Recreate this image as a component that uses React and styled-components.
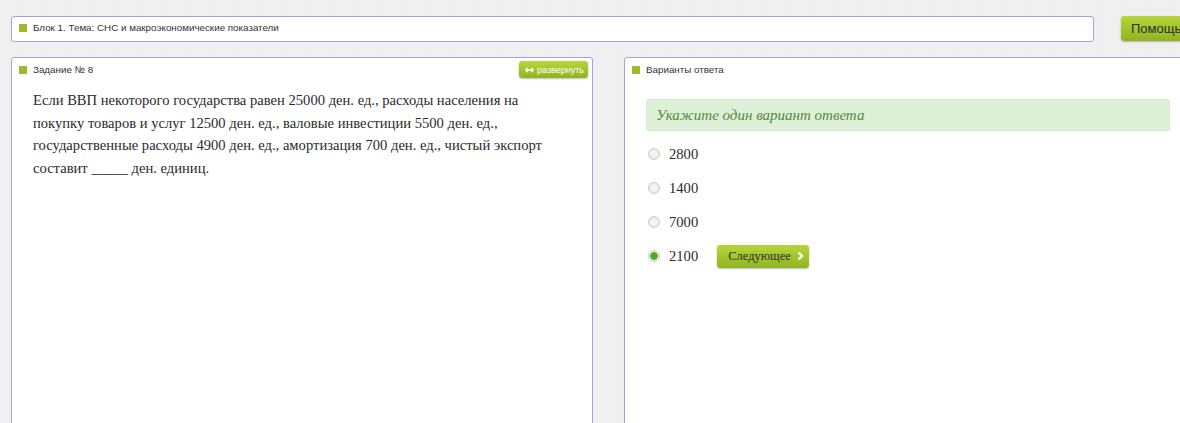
import React from 'react';
import styled, { createGlobalStyle } from 'styled-components';

const GlobalStyle = createGlobalStyle`
    html, body {
        margin: 0;
        padding: 0;
        background: #efefef;
        overflow: hidden;
    }
    body {
        font-family: "Liberation Sans", Arial, sans-serif;
    }
`;

const Page = styled.div`
    width: 1180px;
    height: 423px;
    overflow: hidden;
    padding: 16px 0 0 11px;
    box-sizing: border-box;
    background:
        repeating-linear-gradient(90deg, rgba(255,255,255,0.15) 0 1px, transparent 1px 3px),
        #efefef;
`;

const TopRow = styled.div`
    display: flex;
    align-items: flex-start;
    gap: 27px;
`;

const TopBar = styled.div`
    width: 1083px;
    flex: none;
    height: 26px;
    box-sizing: border-box;
    background: #fff;
    border: 1px solid #a3a3df;
    border-radius: 3px;
    display: flex;
    align-items: center;
    padding: 0 0 2px 7px;
    gap: 6px;
`;

const Square = styled.span`
    width: 8px;
    height: 8px;
    background: #9cbb2f;
    flex: none;
`;

const Label = styled.span`
    font-size: 9.8px;
    color: #333;
    line-height: 1;
`;

const GreenButton = styled.button`
    border: none;
    border-radius: 3px;
    background: linear-gradient(#b6d63a, #8fb422);
    box-shadow: 0 1px 2px rgba(0,0,0,0.25);
    color: #2c2c2c;
    cursor: pointer;
    display: flex;
    align-items: center;
    flex: none;
    padding: 0;
`;

const HelpButton = styled(GreenButton)`
    height: 25px;
    width: 72px;
    padding-left: 10px;
    font-family: "Liberation Sans", Arial, sans-serif;
    font-size: 13px;
`;

const Columns = styled.div`
    display: flex;
    gap: 31px;
    margin-top: 15px;
`;

const Panel = styled.div`
    width: ${p => p.$width}px;
    flex: none;
    height: 400px;
    box-sizing: border-box;
    background: #fff;
    border: 1px solid #a3a3df;
    border-radius: 3px;
    padding: 3px 4px 0 7px;
`;

const PanelHead = styled.div`
    display: flex;
    align-items: center;
    gap: 6px;
    height: 17px;
`;

const Grow = styled.div`
    flex: 1;
`;

const ExpandButton = styled(GreenButton)`
    height: 17px;
    width: 69px;
    padding-left: 6px;
    gap: 3px;
    font-family: "Liberation Sans", Arial, sans-serif;
    font-size: 9px;
    color: #fff;
`;

const Question = styled.p`
    margin: 11px 0 0 14px;
    font-family: "Liberation Serif", "Times New Roman", serif;
    font-size: 14.6px;
    line-height: 22.7px;
    color: #2a2a2a;
    width: 520px;
`;

const Hint = styled.div`
    margin: 21px 0 0 14px;
    width: 524px;
    height: 32px;
    box-sizing: border-box;
    background: #dff0d8;
    border: 1px solid #d5ebcb;
    border-radius: 3px;
    display: flex;
    align-items: center;
    padding-left: 9px;
    font-family: "Liberation Serif", "Times New Roman", serif;
    font-style: italic;
    font-size: 15px;
    color: #4f8a3c;
`;

const Options = styled.div`
    display: flex;
    flex-direction: column;
    margin: 6px 0 0 16px;
`;

const Option = styled.label`
    display: flex;
    align-items: center;
    height: 34px;
    gap: 9px;
    font-family: "Liberation Serif", "Times New Roman", serif;
    font-size: 14.6px;
    color: #2a2a2a;
`;

const Radio = styled.span`
    width: 12px;
    height: 12px;
    border-radius: 50%;
    box-sizing: border-box;
    border: 1px solid #d2d2d2;
    background: ${p => p.$checked
        ? 'radial-gradient(circle, #4fae1f 0 3.5px, #e9e9e9 4px)'
        : 'radial-gradient(circle, #f4f4f4 0 3px, #e2e2e2 5px)'};
    box-shadow: 0 0 2px rgba(0,0,0,0.08);
`;

const NextButton = styled(GreenButton)`
    height: 23px;
    width: 92px;
    margin-left: 10px;
    padding-left: 11px;
    gap: 6px;
    font-family: "Liberation Serif", "Times New Roman", serif;
    font-size: 12.5px;
`;

const Arrow = () => (
    <svg width="9" height="8" viewBox="0 0 9 8">
        <path d="M0.5 4 H8.5 M0.5 4 L2.5 2 M0.5 4 L2.5 6 M8.5 4 L6.5 2 M8.5 4 L6.5 6" stroke="#fff" strokeWidth="1.3" fill="none" />
    </svg>
);

const Chevron = () => (
    <svg width="7" height="10" viewBox="0 0 7 10">
        <path d="M1.5 1.5 L5 5 L1.5 8.5" stroke="#fff" strokeWidth="2.2" fill="none" />
    </svg>
);

const answers = ['2800', '1400', '7000', '2100'];

const App = () => {
    return (
        <Page>
            <GlobalStyle />
            <TopRow>
                <TopBar>
                    <Square />
                    <Label>Блок 1. Тема: СНС и макроэкономические показатели</Label>
                </TopBar>
                <HelpButton>Помощь</HelpButton>
            </TopRow>
            <Columns>
                <Panel $width={582}>
                    <PanelHead>
                        <Square />
                        <Label>Задание № 8</Label>
                        <Grow />
                        <ExpandButton><Arrow />развернуть</ExpandButton>
                    </PanelHead>
                    <Question>
                        Если ВВП некоторого государства равен 25000 ден. ед., расходы населения на
                        покупку товаров и услуг 12500 ден. ед., валовые инвестиции 5500 ден. ед.,
                        государственные расходы 4900 ден. ед., амортизация 700 ден. ед., чистый экспорт
                        составит _____ ден. единиц.
                    </Question>
                </Panel>
                <Panel $width={582}>
                    <PanelHead>
                        <Square />
                        <Label>Варианты ответа</Label>
                    </PanelHead>
                    <Hint>Укажите один вариант ответа</Hint>
                    <Options>
                        {answers.map((a, i) => (
                            <Option key={a}>
                                <Radio $checked={i === 3} />
                                {a}
                                {i === 3 && <NextButton>Следующее<Chevron /></NextButton>}
                            </Option>
                        ))}
                    </Options>
                </Panel>
            </Columns>
        </Page>
    );
};

export default App;
